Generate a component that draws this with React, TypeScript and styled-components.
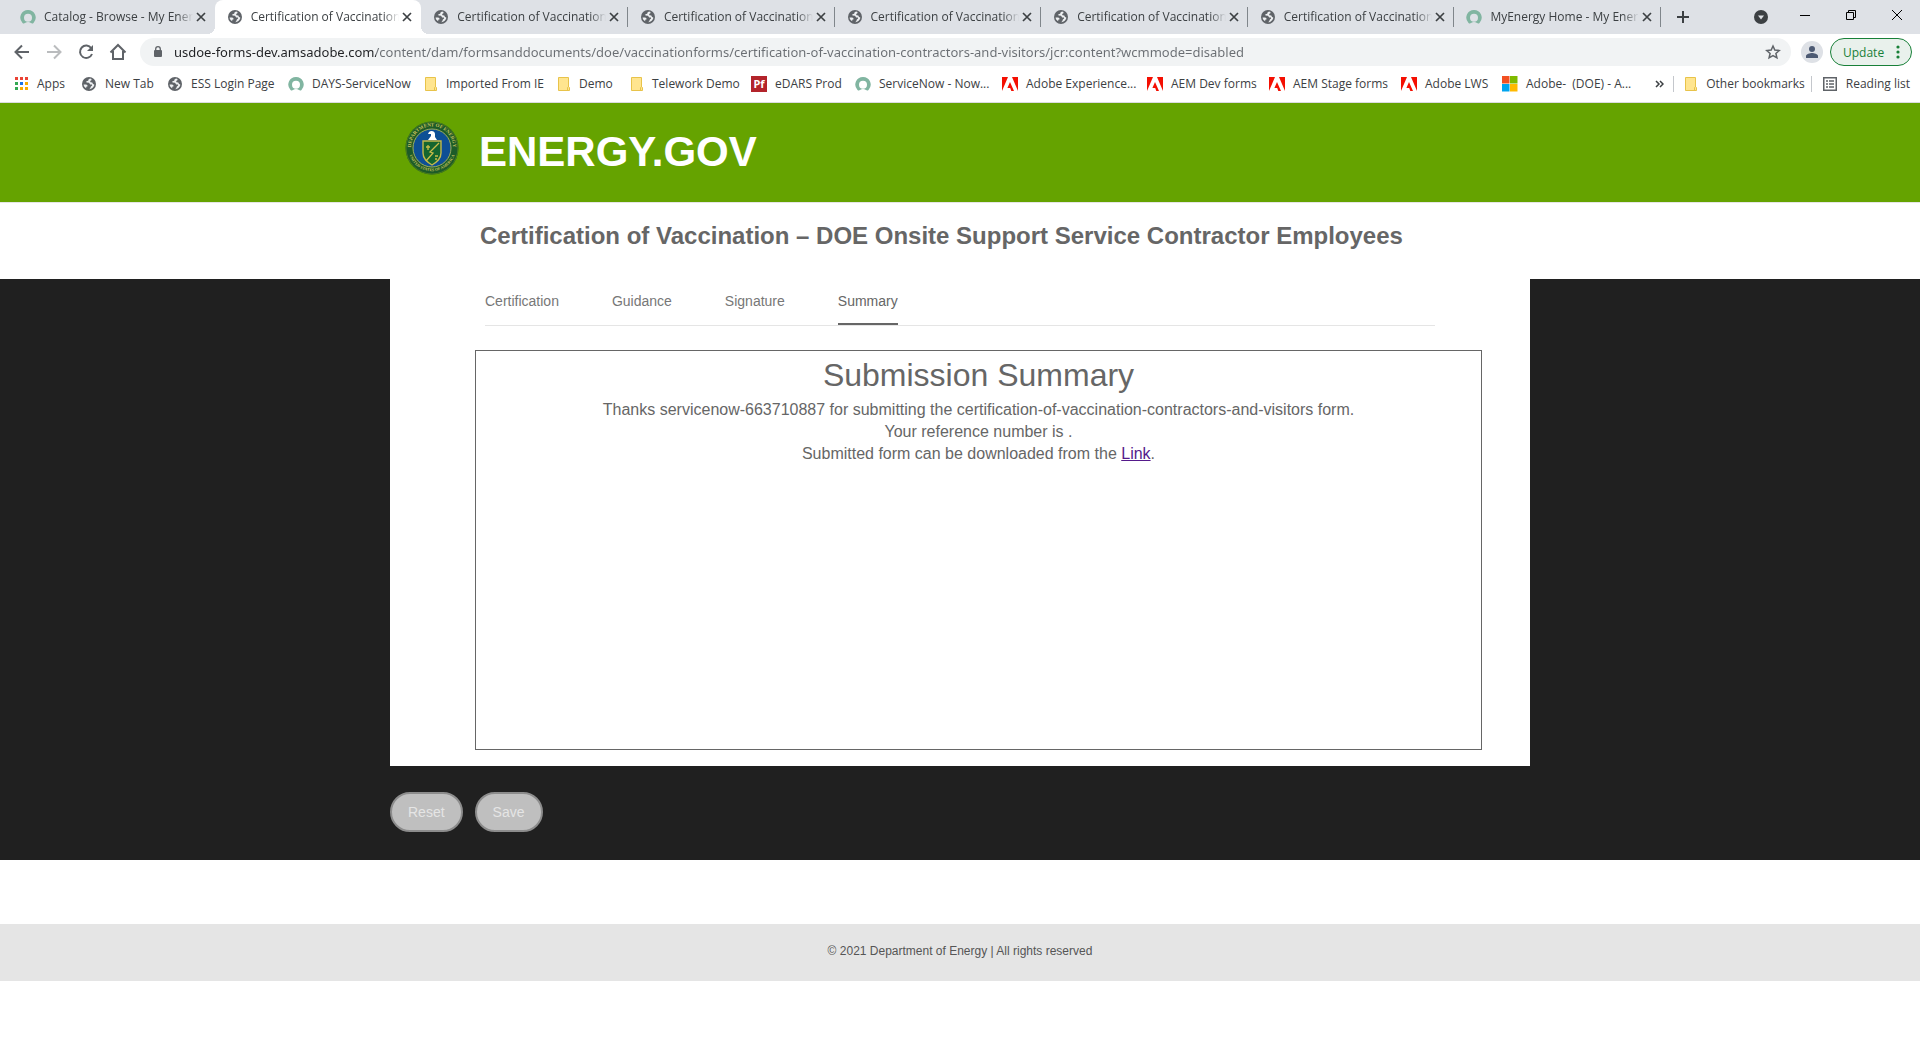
import React from "react";
import styled, { createGlobalStyle } from "styled-components";

const chromeFont = `"Open Sans", "Noto Sans", sans-serif`;
const addressFont = `"Noto Sans", "Open Sans", sans-serif`;
const pageFont = `"Liberation Sans", Arial, sans-serif`;

const GlobalStyle = createGlobalStyle`
  *, *::before, *::after { box-sizing: border-box; }
  body { margin: 0; background: #fff; font-family: ${pageFont}; color: #666; }
  button { font: inherit; color: inherit; border: 0; padding: 0; background: none; }
  h1, h2, p { margin: 0; }
  svg { display: block; flex: none; }
`;

/* ---------- browser chrome ---------- */

const Chrome = styled.div`
  font-family: ${chromeFont};
  font-size: 12px;
  color: #3c4043;
  border-bottom: 1px solid #dadce0;
`;

const TabStrip = styled.div`
  display: flex;
  height: 34px;
  padding-left: 8px;
  background: #dee1e6;
`;

const BrowserTab = styled.div<{ $active: boolean; $divided: boolean }>`
  position: relative;
  flex: 1 1 0;
  min-width: 0;
  display: flex;
  align-items: center;
  padding: 0 6px 0 12px;
  border-radius: ${(p) => (p.$active ? "8px 8px 0 0" : "0")};
  background: ${(p) => (p.$active ? "#fff" : "transparent")};

  &::before,
  &::after {
    content: "";
    display: ${(p) => (p.$active ? "block" : "none")};
    position: absolute;
    bottom: 0;
    width: 8px;
    height: 8px;
  }
  &::before {
    right: 100%;
    background: radial-gradient(circle at 0 0, transparent 8px, #fff 8px);
  }
  &::after {
    left: 100%;
    background: radial-gradient(circle at 100% 0, transparent 8px, #fff 8px);
  }
  ${(p) =>
    p.$divided &&
    `&::after {
      display: block;
      left: auto;
      right: 0;
      bottom: 7px;
      width: 1px;
      height: 20px;
      background: #80868b;
    }`}
`;

const TabTitle = styled.button`
  flex: 1;
  min-width: 0;
  margin-left: 8px;
  overflow: hidden;
  white-space: nowrap;
  text-align: left;
  line-height: 20px;
  mask-image: linear-gradient(to left, transparent, #000 16px);
`;

const IconButton = styled.button<{ $width: number; $color?: string }>`
  display: flex;
  flex: none;
  align-items: center;
  justify-content: center;
  width: ${(p) => p.$width}px;
  height: 28px;
  color: ${(p) => p.$color ?? "#5f6368"};
`;

const StripEnd = styled.div`
  display: flex;
  flex: none;
  align-items: center;
  justify-content: space-between;
  width: 259px;
  padding-left: 8px;
`;

const WindowControls = styled.div`
  display: flex;
  align-items: center;
`;

const Toolbar = styled.div`
  display: flex;
  align-items: center;
  height: 36px;
  padding: 0 8px 0 4px;
`;

const AddressBar = styled.label`
  display: flex;
  flex: 1;
  align-items: center;
  gap: 10px;
  height: 28px;
  margin: 0 10px 0 8px;
  padding: 0 4px 0 12px;
  border-radius: 14px;
  background: #f1f3f4;
  color: #5f6368;
`;

const AddressInput = styled.input`
  flex: 1;
  min-width: 0;
  padding: 0;
  border: 0;
  outline: 0;
  font: 13px/20px ${addressFont};
  color: #5f6368;
  background: linear-gradient(to right, #202124 202px, #6a6e73 202px);
  background-clip: text;
  -webkit-text-fill-color: transparent;
`;

const Avatar = styled.button`
  display: flex;
  align-items: center;
  justify-content: center;
  width: 22px;
  height: 22px;
  margin-right: 7px;
  border-radius: 50%;
  background: #dee1e6;
  color: #4d5a73;
`;

const UpdateButton = styled.button`
  display: flex;
  align-items: center;
  justify-content: space-between;
  width: 82px;
  height: 28px;
  padding: 0 11px 0 12px;
  border: 1px solid #188038;
  border-radius: 14px;
  background: #e9f1ec;
  color: #188038;
`;

const BookmarkBar = styled.nav`
  display: flex;
  align-items: center;
  height: 32px;
  padding: 0 10px 4px 13px;
`;

const Bookmark = styled.a<{ $width?: number }>`
  display: flex;
  flex: none;
  align-items: center;
  gap: 8px;
  width: ${(p) => (p.$width ? `${p.$width}px` : "auto")};
  color: inherit;
  text-decoration: none;
  white-space: pre;
  line-height: 20px;
`;

const BookmarkEnd = styled.div`
  display: flex;
  align-items: center;
  margin-left: auto;
`;

const Rule = styled.span`
  width: 1px;
  height: 16px;
  margin: 0 10px 0 6px;
  background: #c4c7cc;
`;

/* ---------- page ---------- */

const Banner = styled.header`
  background: #65a300;
  border-bottom: 1px solid #e5e5e5;
`;

const BannerInner = styled.div`
  display: flex;
  align-items: center;
  gap: 20px;
  max-width: 1140px;
  height: 99px;
  margin: 0 auto;
  padding: 0 15px 9px;
`;

const SiteName = styled.a`
  color: #fff;
  font-size: 42px;
  font-weight: bold;
  line-height: 48px;
  padding-top: 8px;
  text-decoration: none;
`;

const FormTitle = styled.h1`
  max-width: 1140px;
  margin: 0 auto;
  padding: 19px 0 29px 90px;
  font-size: 24px;
  line-height: 28px;
`;

const FormArea = styled.main`
  background: #202020;
`;

const Column = styled.div`
  max-width: 1140px;
  margin: 0 auto;
`;

const Card = styled.section`
  padding: 0 48px 16px 85px;
  background: #fff;
`;

const StepTabs = styled.div`
  display: flex;
  gap: 53px;
  margin: 0 47px 24px 10px;
  border-bottom: 1px solid #e5e5e5;
`;

const StepTab = styled.button<{ $active: boolean }>`
  height: 46px;
  border-bottom: 2px solid ${(p) => (p.$active ? "#666" : "transparent")};
  color: ${(p) => (p.$active ? "#666" : "#777")};
  font-size: 14px;
`;

const SummaryBox = styled.div`
  min-height: 400px;
  padding: 6px 16px;
  border: 1px solid #666;
  text-align: center;
  font-size: 16px;
  line-height: 22px;
`;

const SummaryTitle = styled.h2`
  margin-bottom: 6px;
  font-size: 32px;
  font-weight: normal;
  line-height: 36px;
`;

const DownloadLink = styled.a`
  color: #551a8b;
`;

const Actions = styled.div`
  display: flex;
  gap: 12px;
  padding: 26px 0 28px;
`;

const PillButton = styled.button`
  height: 40px;
  padding: 0 16px;
  border: 2px solid #8c8c8c;
  border-radius: 20px;
  background: #bfbfbf;
  color: #e5e5e5;
  font-size: 14px;
`;

const Footer = styled.footer`
  margin-top: 64px;
  padding: 19px 0 22px;
  background: #e5e5e5;
  color: #555;
  text-align: center;
  font-size: 12px;
  line-height: 16px;
`;

/* ---------- icons ---------- */

const Globe = () => (
  <svg width="16" height="16" viewBox="0 0 16 16">
    <circle cx="8" cy="8" r="7" fill="#5f6368" />
    <path
      d="M9 2.500 7.500 3.400 7.200 4.700 5.300 5.300 5.500 6.600 8 6.800 9.200 8.400 11 8.500 11.100 9.600 9.900 10.500 9.200 12.200 8.200 13.300C10.800 13.200 13.200 11 13.300 8.600L12 7.900 11.300 6.500 9.500 6.200 9.100 5 10.400 4.200 10.500 3ZM2.600 8.400 5.300 8.500 6.600 9.400 6.400 10.500 5.200 10.700 5.200 12.200C3.800 11.400 2.700 10.100 2.600 8.400Z"
      fill="#eef0f2"
    />
  </svg>
);

const ServiceNow = () => (
  <svg width="16" height="16" viewBox="0 0 16 16">
    <path
      d="M8 1a7.600 7.600 0 0 0-5.500 12.900c.7.7 1.700.8 2.500.2a5 5 0 0 1 6 0c.8.6 1.800.5 2.500-.2A7.600 7.600 0 0 0 8 1Zm0 11.800a4 4 0 1 1 0-8 4 4 0 0 1 0 8Z"
      fill="#81b5a1"
    />
  </svg>
);

const Folder = () => (
  <svg width="14" height="16" viewBox="0 0 14 16">
    <path d="M1.500 1.500h10v9.500l1 .5v3h-11Z" fill="#ffe58f" stroke="#e8c34a" />
    <path d="M10.500 14.500v-3l1-1" fill="none" stroke="#e8c34a" />
  </svg>
);

const Adobe = () => (
  <svg width="16" height="16" viewBox="0 0 16 16">
    <path d="M0 1h6L0 15ZM10 1h6v14ZM8 6l4 9H9.300L8.200 12H5.400Z" fill="#f40f02" />
  </svg>
);

const Pf = () => (
  <svg width="16" height="16" viewBox="0 0 16 16">
    <rect width="16" height="16" fill="#b3242b" />
    <text x="8" y="12" textAnchor="middle" fontFamily="Noto Sans, sans-serif" fontSize="11" fontWeight="bold" fill="#fff">
      Pf
    </text>
  </svg>
);

const Microsoft = () => (
  <svg width="16" height="16" viewBox="0 0 16 16">
    <path d="M0 0h7.500v7.500H0Z" fill="#f25022" />
    <path d="M8 0h7.500v7.500H8Z" fill="#7fba00" />
    <path d="M0 8h7.500v7.500H0Z" fill="#00a4ef" />
    <path d="M8 8h7.500v7.500H8Z" fill="#ffb900" />
  </svg>
);

const appColors = ["#ea4335", "#ea4335", "#ea4335", "#34a853", "#1a73e8", "#f9ab00", "#34a853", "#f9ab00", "#f9ab00"];

const AppsGrid = () => (
  <svg width="16" height="16" viewBox="0 0 16 16">
    {appColors.map((fill, i) => (
      <rect key={i} x={2 + (i % 3) * 5} y={1 + Math.floor(i / 3) * 5} width="3" height="3" fill={fill} />
    ))}
  </svg>
);

const ReadingList = () => (
  <svg width="16" height="16" viewBox="0 0 16 16" fill="none" stroke="#5f6368" strokeWidth="1.500">
    <rect x="1.750" y="1.750" width="12.500" height="12.500" />
    <path d="M4 5h2M7 5h5M4 8h2M7 8h5M4 11h2M7 11h5" />
  </svg>
);

const Cross = () => (
  <svg width="10" height="10" viewBox="0 0 10 10" stroke="#3c4043" strokeWidth="1.700">
    <path d="m1 1 8 8M9 1 1 9" />
  </svg>
);

const Plus = () => (
  <svg width="14" height="14" viewBox="0 0 14 14" stroke="#3c4043" strokeWidth="2">
    <path d="M7 1v12M1 7h12" />
  </svg>
);

const TabSearch = () => (
  <svg width="14" height="14" viewBox="0 0 14 14">
    <circle cx="7" cy="7" r="7" fill="#3c4043" />
    <path d="M4 5.500h6L7 9.500Z" fill="#dee1e6" />
  </svg>
);

const Minimize = () => (
  <svg width="10" height="10" viewBox="0 0 10 10">
    <path d="M0 3.500h10" stroke="#000" />
  </svg>
);

const Restore = () => (
  <svg width="10" height="14" viewBox="0 0 10 14" fill="none" stroke="#000">
    <path d="M.5 2.500h7v7h-7ZM2.500 2.500v-2h7v7h-2" />
  </svg>
);

const CloseWindow = () => (
  <svg width="10" height="14" viewBox="0 0 10 14" stroke="#000">
    <path d="m0 0 10 10M10 0 0 10" />
  </svg>
);

const Arrow = ({ flip }: { flip?: boolean }) => (
  <svg width="16" height="16" viewBox="0 0 16 16" fill="none" stroke="currentColor" strokeWidth="2">
    <path d={flip ? "M1 8h13M8 1.500 14.500 8 8 14.500" : "M15 8H2M8 1.500 1.500 8 8 14.500"} />
  </svg>
);

const Reload = () => (
  <svg width="16" height="16" viewBox="0 0 16 16">
    <path d="M13.300 4.200A6.200 6.200 0 1 0 14 10" fill="none" stroke="currentColor" strokeWidth="2" />
    <path d="M15 1v6H9Z" fill="currentColor" />
  </svg>
);

const Home = () => (
  <svg width="18" height="18" viewBox="0 0 18 18" fill="none" stroke="currentColor" strokeWidth="2">
    <path d="M1.500 9.500 9 2l7.500 7.500M4 8v8h10V8" />
  </svg>
);

const Lock = () => (
  <svg width="12" height="14" viewBox="0 0 12 14">
    <rect x="2" y="5" width="8" height="7" rx="1" fill="currentColor" />
    <path d="M3.700 6V4a2.300 2.300 0 0 1 4.600 0v2" fill="none" stroke="currentColor" strokeWidth="1.300" />
  </svg>
);

const Star = () => (
  <svg width="16" height="16" viewBox="0 0 16 16" fill="none" stroke="currentColor" strokeWidth="1.500">
    <path d="m8 2 1.800 4.100 4.400.4-3.300 2.900 1 4.400L8 11.500l-3.900 2.300 1-4.400-3.300-2.900 4.400-.4Z" />
  </svg>
);

const Person = () => (
  <svg width="12" height="12" viewBox="0 0 12 12" fill="currentColor">
    <circle cx="6" cy="3" r="3" />
    <path d="M0 12v-2c0-2 4-3 6-3s6 1 6 3v2Z" />
  </svg>
);

const Dots = () => (
  <svg width="4" height="14" viewBox="0 0 4 14" fill="currentColor">
    <circle cx="2" cy="2" r="1.600" />
    <circle cx="2" cy="7" r="1.600" />
    <circle cx="2" cy="12" r="1.600" />
  </svg>
);

const Chevrons = () => (
  <svg width="9" height="8" viewBox="0 0 9 8" fill="none" stroke="#3c4043" strokeWidth="1.500">
    <path d="m1 1 3 3-3 3M5 1l3 3-3 3" />
  </svg>
);

const Seal = () => (
  <svg width="54" height="54" viewBox="0 0 54 54" role="img" aria-label="Department of Energy seal">
    <defs>
      <path id="seal-top" d="M6.500 31A21 21 0 1 1 47.500 31" />
      <path id="seal-bottom" d="M3.500 31A24 24 0 0 0 50.500 31" />
    </defs>
    <circle cx="27" cy="27" r="26.500" fill="#1d5b28" />
    <circle cx="27" cy="27" r="26" fill="none" stroke="#4b7d1c" />
    <circle cx="27" cy="27" r="19" fill="#0d4f95" stroke="#9fae5a" />
    <g fontFamily="Liberation Serif, serif" fontSize="5" fontWeight="bold" fill="#c9c25c">
      <text textAnchor="middle">
        <textPath href="#seal-top" startOffset="50%">DEPARTMENT OF ENERGY</textPath>
      </text>
      <text textAnchor="middle" fontSize="4">
        <textPath href="#seal-bottom" startOffset="50%">UNITED STATES OF AMERICA</textPath>
      </text>
    </g>
    <path d="M18 20h18v12c0 6-4 9-9 12-5-3-9-6-9-12Z" fill="#14652f" stroke="#c4b94b" strokeWidth="1.400" />
    <path d="M34 22 25 31l3 1-7 8M21 26h4M23 24v5M30 35h3M30 38h2" fill="none" stroke="#c9bd4a" strokeWidth="1.300" />
    <path d="M24 11c2-2 6-1 6 2v3l2 3h-9l3-4v-2l-3 0Z" fill="#fff" />
  </svg>
);

/* ---------- data ---------- */

const browserTabs = [
  { title: "Catalog - Browse - My Ener", icon: <ServiceNow /> },
  ...Array.from({ length: 6 }, () => ({ title: "Certification of Vaccination", icon: <Globe /> })),
  { title: "MyEnergy Home - My Ener", icon: <ServiceNow /> },
];

const bookmarks = [
  { label: "Apps", icon: <AppsGrid />, width: 68 },
  { label: "New Tab", icon: <Globe />, width: 86 },
  { label: "ESS Login Page", icon: <Globe />, width: 121 },
  { label: "DAYS-ServiceNow", icon: <ServiceNow />, width: 136 },
  { label: "Imported From IE", icon: <Folder />, width: 133 },
  { label: "Demo", icon: <Folder />, width: 73 },
  { label: "Telework Demo", icon: <Folder />, width: 121 },
  { label: "eDARS Prod", icon: <Pf />, width: 104 },
  { label: "ServiceNow - Now...", icon: <ServiceNow />, width: 147 },
  { label: "Adobe Experience...", icon: <Adobe />, width: 145 },
  { label: "AEM Dev forms", icon: <Adobe />, width: 122 },
  { label: "AEM Stage forms", icon: <Adobe />, width: 132 },
  { label: "Adobe LWS", icon: <Adobe />, width: 101 },
  { label: "Adobe-  (DOE) - A...", icon: <Microsoft />, width: 140 },
];

const steps = ["Certification", "Guidance", "Signature", "Summary"];

const url =
  "usdoe-forms-dev.amsadobe.com/content/dam/formsanddocuments/doe/vaccinationforms/certification-of-vaccination-contractors-and-visitors/jcr:content?wcmmode=disabled";

const ACTIVE_TAB = 1;

export default function App() {
  return (
    <>
      <GlobalStyle />
      <Chrome>
        <TabStrip>
          {browserTabs.map((tab, i) => (
            <BrowserTab key={i} $active={i === ACTIVE_TAB} $divided={i > ACTIVE_TAB}>
              {tab.icon}
              <TabTitle>{tab.title}</TabTitle>
              <IconButton $width={16} aria-label="Close tab">
                <Cross />
              </IconButton>
            </BrowserTab>
          ))}
          <StripEnd>
            <IconButton $width={28} aria-label="New tab">
              <Plus />
            </IconButton>
            <WindowControls>
              <IconButton $width={42} aria-label="Search tabs">
                <TabSearch />
              </IconButton>
              <IconButton $width={46} aria-label="Minimize">
                <Minimize />
              </IconButton>
              <IconButton $width={46} aria-label="Restore">
                <Restore />
              </IconButton>
              <IconButton $width={46} aria-label="Close window">
                <CloseWindow />
              </IconButton>
            </WindowControls>
          </StripEnd>
        </TabStrip>
        <Toolbar>
          <IconButton $width={36} aria-label="Back">
            <Arrow />
          </IconButton>
          <IconButton $width={28} $color="#babcbe" aria-label="Forward">
            <Arrow flip />
          </IconButton>
          <IconButton $width={36} aria-label="Reload">
            <Reload />
          </IconButton>
          <IconButton $width={28} aria-label="Home">
            <Home />
          </IconButton>
          <AddressBar>
            <Lock />
            <AddressInput type="text" aria-label="Address" defaultValue={url} />
            <IconButton $width={28} aria-label="Bookmark this page">
              <Star />
            </IconButton>
          </AddressBar>
          <Avatar aria-label="Profile">
            <Person />
          </Avatar>
          <UpdateButton>
            Update
            <Dots />
          </UpdateButton>
        </Toolbar>
        <BookmarkBar aria-label="Bookmarks">
          {bookmarks.map((b) => (
            <Bookmark key={b.label} href="#" $width={b.width}>
              {b.icon}
              {b.label}
            </Bookmark>
          ))}
          <BookmarkEnd>
            <IconButton $width={16} aria-label="More bookmarks">
              <Chevrons />
            </IconButton>
            <Rule />
            <Bookmark href="#">
              <Folder />
              Other bookmarks
            </Bookmark>
            <Rule />
            <Bookmark href="#">
              <ReadingList />
              Reading list
            </Bookmark>
          </BookmarkEnd>
        </BookmarkBar>
      </Chrome>

      <Banner>
        <BannerInner>
          <Seal />
          <SiteName href="#">ENERGY.GOV</SiteName>
        </BannerInner>
      </Banner>
      <FormTitle>Certification of Vaccination – DOE Onsite Support Service Contractor Employees</FormTitle>
      <FormArea>
        <Column>
          <Card>
            <StepTabs role="tablist">
              {steps.map((step) => (
                <StepTab key={step} role="tab" aria-selected={step === "Summary"} $active={step === "Summary"}>
                  {step}
                </StepTab>
              ))}
            </StepTabs>
            <SummaryBox>
              <SummaryTitle>Submission Summary</SummaryTitle>
              <p>Thanks servicenow-663710887 for submitting the certification-of-vaccination-contractors-and-visitors form.</p>
              <p>Your reference number is .</p>
              <p>
                Submitted form can be downloaded from the <DownloadLink href="#">Link</DownloadLink>.
              </p>
            </SummaryBox>
          </Card>
          <Actions>
            <PillButton disabled>Reset</PillButton>
            <PillButton disabled>Save</PillButton>
          </Actions>
        </Column>
      </FormArea>
      <Footer>© 2021 Department of Energy | All rights reserved</Footer>
    </>
  );
}
